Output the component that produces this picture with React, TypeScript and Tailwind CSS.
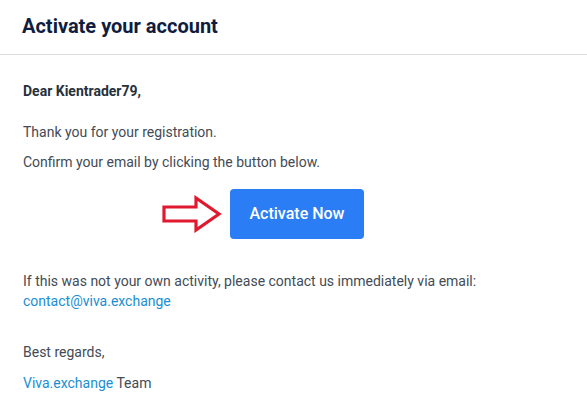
import React from 'react';

function ArrowIcon() {
  return (
    <svg width="60" height="38" viewBox="0 0 60 38" className="shrink-0">
      <path
        d="M2 12 H34 V3 L57 19 L34 35 V26 H2 Z"
        fill="none"
        stroke="#e0192f"
        strokeWidth="3.2"
        strokeLinejoin="miter"
      />
    </svg>
  );
}

export default function App() {
  return (
    <div className="w-[587px] h-[409px] bg-white font-['Roboto',sans-serif] overflow-hidden">
      {/* Header */}
      <div className="h-[55px] border-b border-[#dedede] flex items-center px-[22px]">
        <h1 className="text-[20px] font-bold text-[#101d3f] leading-none -mt-[3px]">Activate your account</h1>
      </div>

      {/* Body */}
      <div className="px-[23px] text-[14px] leading-[20px] text-[#434b55]">
        <p className="mt-[26px] text-[14px] font-bold text-[#28313b]">Dear Kientrader79,</p>
        <p className="mt-[21px]">Thank you for your registration.</p>
        <p className="mt-[10px]">Confirm your email by clicking the button below.</p>

        <div className="mt-[17px] flex items-center justify-center gap-[8px] pr-[61px]">
          <ArrowIcon />
          <button className="w-[134px] h-[50px] rounded-[4px] bg-[#2a7df5] text-white text-[16px] font-medium">
            Activate Now
          </button>
        </div>

        <p className="mt-[32px]">If this was not your own activity, please contact us immediately via email:</p>
        <a className="text-[#1a8ed2]">contact@viva.exchange</a>
        <p className="mt-[31px]">Best regards,</p>
        <p className="mt-[11px]">
          <a className="text-[#1a8ed2]">Viva.exchange</a> Team
        </p>
      </div>
    </div>
  );
}
